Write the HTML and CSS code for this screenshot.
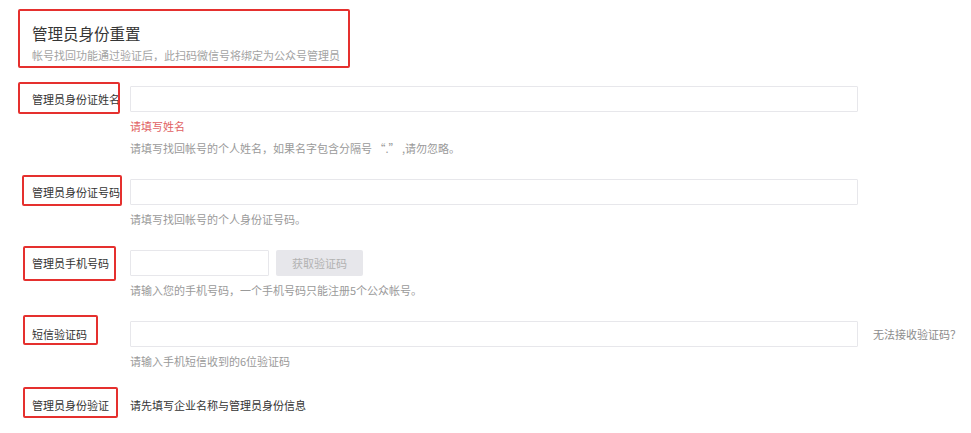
FILE: index.html
```html
<!DOCTYPE html>
<html lang="zh-CN">
<head>
<meta charset="utf-8">
<title>管理员身份重置</title>
<link rel="stylesheet" href="styles.css">
</head>
<body>
<div class="page">
  <div class="header">
    <div class="title">管理员身份重置</div>
    <div class="subtitle">帐号找回功能通过验证后，此扫码微信号将绑定为公众号管理员</div>
  </div>

  <div class="row row-1">
    <div class="label"><span class="mark mark-1"></span>管理员身份证姓名</div>
    <div class="field">
      <input class="input input-wide" type="text">
      <div class="tip tip-error">请填写姓名</div>
      <div class="tip tip-help">请填写找回帐号的个人姓名，如果名字包含分隔号 “.” ,请勿忽略。</div>
    </div>
  </div>

  <div class="row">
    <div class="label"><span class="mark mark-2"></span>管理员身份证号码</div>
    <div class="field">
      <input class="input input-wide" type="text">
      <div class="tip tip-help">请填写找回帐号的个人身份证号码。</div>
    </div>
  </div>

  <div class="row">
    <div class="label"><span class="mark mark-3"></span>管理员手机号码</div>
    <div class="field">
      <div class="inline">
        <input class="input input-short" type="text">
        <button class="btn" type="button">获取验证码</button>
      </div>
      <div class="tip tip-help">请输入您的手机号码，一个手机号码只能注册5个公众帐号。</div>
    </div>
  </div>

  <div class="row">
    <div class="label"><span class="mark mark-4"></span>短信验证码</div>
    <div class="field">
      <div class="inline">
        <input class="input input-wide" type="text">
        <a class="aside-link" href="#">无法接收验证码？</a>
      </div>
      <div class="tip tip-help">请输入手机短信收到的6位验证码</div>
    </div>
  </div>

  <div class="row">
    <div class="label"><span class="mark mark-5"></span>管理员身份验证</div>
    <div class="field">
      <div class="plain">请先填写企业名称与管理员身份信息</div>
    </div>
  </div>
</div>
</body>
</html>
```

FILE: styles.css
```css
* { box-sizing: border-box; }

html, body {
  margin: 0;
  padding: 0;
  background: #ffffff;
}

body {
  font-family: "Noto Sans CJK SC", "Noto Sans", sans-serif;
  font-size: 11px;
  color: #333333;
}

.page {
  padding-top: 9px;
  width: 971px;
}

.header {
  margin-left: 18px;
  width: 332px;
  height: 59px;
  border: 2px solid #e5302e;
  border-radius: 2px;
  padding: 10px 0 0 12px;
}

.title {
  font-size: 15.5px;
  line-height: 24px;
  color: #353535;
}

.subtitle {
  margin-top: 2px;
  font-size: 11px;
  line-height: 16px;
  color: #a3a3a3;
}

.row {
  display: flex;
  align-items: flex-start;
  margin-top: 20px;
}

.row-1 {
  margin-top: 18px;
}

.label {
  position: relative;
  width: 130px;
  flex: none;
  padding-left: 32px;
  line-height: 26px;
  font-size: 11px;
  color: #333333;
  white-space: nowrap;
}

.mark {
  position: absolute;
  border: 2px solid #e5302e;
  border-radius: 2px;
}

.mark-1 { left: 18px; top: -4px; width: 102px; height: 32px; }
.mark-2 { left: 22px; top: -4px; width: 100px; height: 31px; }
.mark-3 { left: 23px; top: -4px; width: 93px; height: 35px; }
.mark-4 { left: 23px; top: -6px; width: 75px; height: 30px; }
.mark-5 { left: 23px; top: -5px; width: 95px; height: 31px; }

.field {
  flex: 1;
}

.inline {
  display: flex;
  align-items: center;
}

.input {
  display: block;
  height: 26px;
  margin: 0;
  border: 1px solid #e7e7eb;
  border-radius: 1px;
  background: #ffffff;
  padding: 0 8px;
  font: inherit;
  outline: none;
}

.input-wide { width: 728px; }
.input-short { width: 139px; }

.btn {
  margin-left: 7px;
  width: 87px;
  height: 26px;
  border: 0;
  border-radius: 2px;
  background: #e7e7eb;
  color: #b2b2b2;
  font-family: inherit;
  font-size: 11px;
  padding: 0;
}

.aside-link {
  margin-left: 15px;
  font-size: 11px;
  color: #8c8c8c;
  text-decoration: none;
  white-space: nowrap;
}

.tip {
  font-size: 11px;
  line-height: 22px;
}

.tip-error {
  margin-top: 3px;
  color: #e15f63;
}

.tip-help {
  margin-top: 3px;
  color: #9a9a9a;
}

.tip-error + .tip-help {
  margin-top: 0;
}

.plain {
  line-height: 26px;
  font-size: 11px;
  color: #333333;
}
```
